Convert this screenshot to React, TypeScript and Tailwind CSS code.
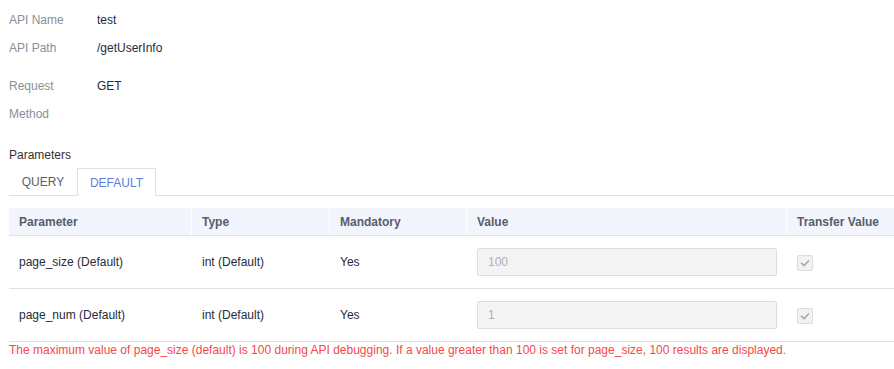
const rows = [
  { name: "page_size (Default)", type: "int (Default)", mandatory: "Yes", value: "100" },
  { name: "page_num (Default)", type: "int (Default)", mandatory: "Yes", value: "1" },
];

const CheckIcon = () => (
  <svg width="10" height="8" viewBox="0 0 10 8" fill="none">
    <path d="M1 3.8 L4 6.5 L9 1.5" stroke="#a8abb3" strokeWidth="1.7" />
  </svg>
);

export default function App() {
  return (
    <div className="w-[894px] h-[369px] bg-white overflow-hidden text-[12px] text-[#252b3a] font-['Liberation_Sans',Arial,sans-serif]">
      <div className="pt-[6px] pl-[9px]">
        <div className="flex leading-[28px]">
          <div className="w-[88px] text-[#8a8e99]">API Name</div>
          <div>test</div>
        </div>
        <div className="flex leading-[28px]">
          <div className="w-[88px] text-[#8a8e99]">API Path</div>
          <div>/getUserInfo</div>
        </div>
        <div className="flex leading-[28px] mt-[10px]">
          <div className="w-[88px] text-[#8a8e99]">
            Request
            <br />
            Method
          </div>
          <div>GET</div>
        </div>
      </div>

      <div className="pl-[9px] mt-[18px] leading-[18px] text-[#333]">Parameters</div>

      <div className="ml-[9px] mt-[4px] flex border-b border-[#dfe1e6] h-[28px]">
        <div className="w-[68px] flex items-center justify-center text-[#575d6c] pt-[1px]">QUERY</div>
        <div className="w-[79px] flex items-center justify-center text-[#5e7ce0] border border-b-0 border-[#dfe1e6] bg-white h-[28px] pt-[1px] mb-[-1px]">
          DEFAULT
        </div>
      </div>

      <div className="ml-[9px] mt-[12px]">
        <div className="flex h-[28px] bg-[#f2f5fc] border-b border-[#dfe1e6] font-bold text-[#575d6c] items-center">
          <div className="w-[182px] pl-[10px]">Parameter</div>
          <div className="w-[138px] pl-[10px] h-full flex items-center border-l border-white">Type</div>
          <div className="w-[137px] pl-[10px] h-full flex items-center border-l border-white">Mandatory</div>
          <div className="w-[320px] pl-[10px] h-full flex items-center border-l border-white">Value</div>
          <div className="flex-1 pl-[10px] h-full flex items-center border-l border-white">Transfer Value</div>
        </div>
        {rows.map((r) => (
          <div key={r.name} className="flex h-[53px] border-b border-[#dfe1e6] items-center">
            <div className="w-[182px] pl-[10px]">{r.name}</div>
            <div className="w-[138px] pl-[11px]">{r.type}</div>
            <div className="w-[137px] pl-[11px]">{r.mandatory}</div>
            <div className="w-[320px] pl-[11px] pr-[9px]">
              <div className="h-[28px] mt-[-1px] bg-[#f4f4f4] border border-[#dcdde0] rounded-[2px] flex items-center pl-[10px] text-[#adb0b8]">
                {r.value}
              </div>
            </div>
            <div className="flex-1 pl-[11px]">
              <div className="w-[16px] h-[16px] mt-[2px] bg-[#f2f2f3] border border-[#dcdde0] rounded-[2px] flex items-center justify-center">
                <CheckIcon />
              </div>
            </div>
          </div>
        ))}
      </div>

      <div className="pl-[9px] leading-[16px] text-[#f5484b]">
        The maximum value of page_size (default) is 100 during API debugging. If a value greater than 100 is set for page_size, 100 results are displayed.
      </div>
    </div>
  );
}
